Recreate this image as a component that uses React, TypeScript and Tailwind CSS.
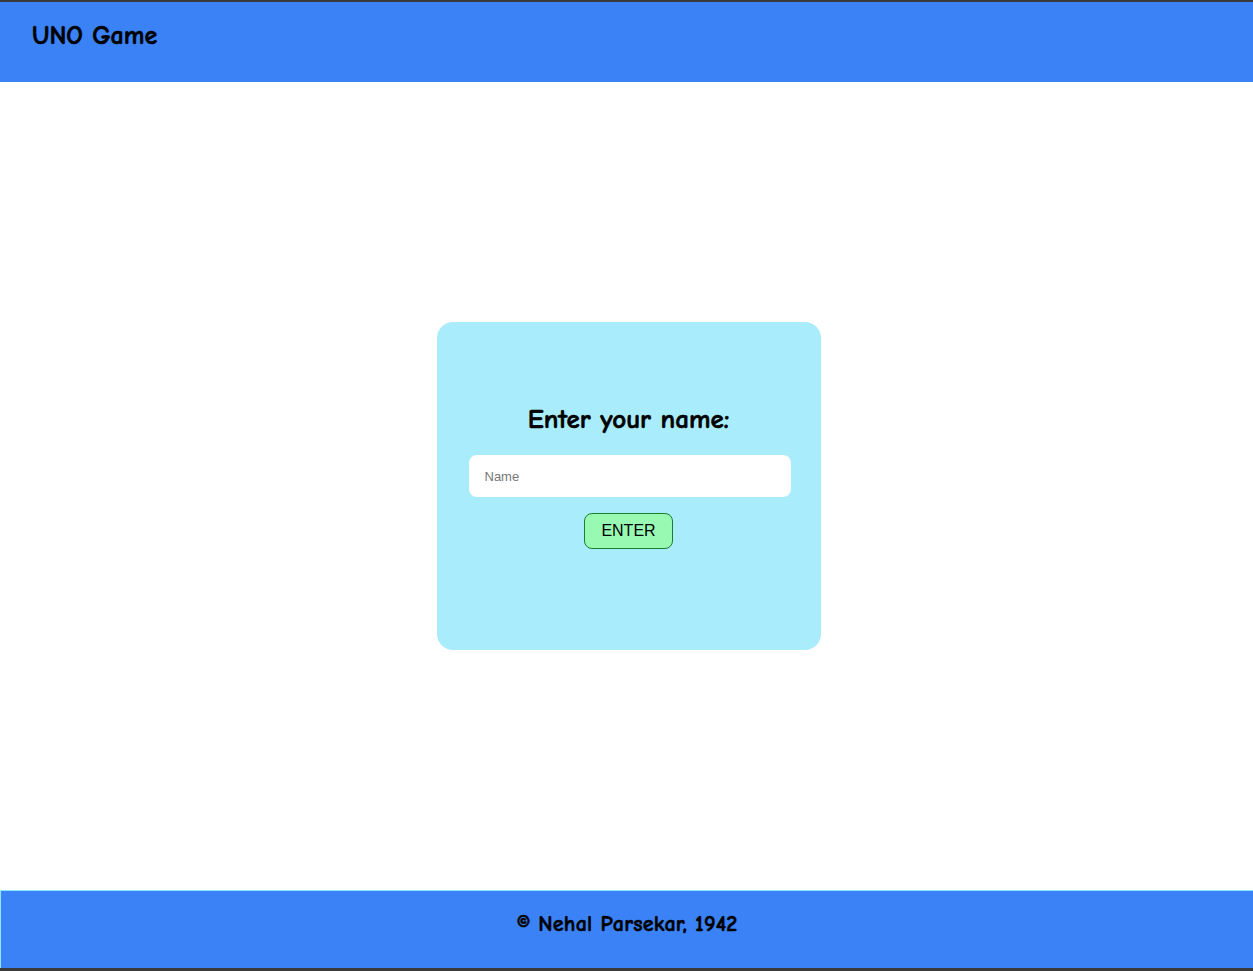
export default function App() {
  const comic = { fontFamily: '"Comic Sans MS", "Comic Neue", "Liberation Sans", sans-serif' };
  return (
    <div className="flex h-[971px] flex-col bg-white border-t-2 border-b-[3px] border-[#3a3a3a]">
      <header className="h-[80px] shrink-0 bg-[#3b82f6] px-8 pt-[18px]">
        <h1 className="text-[26px] font-bold leading-8 text-black [-webkit-text-stroke:0.6px_black]" style={comic}>UNO Game</h1>
      </header>
      <main className="flex flex-1 items-center justify-center pl-1">
        <div className="flex h-[328px] w-96 flex-col items-center rounded-2xl bg-[#a9ecfc] px-8 pt-[82px]">
          <h2 className="text-[27px] font-bold leading-8 text-black [-webkit-text-stroke:0.6px_black]" style={comic}>Enter your name:</h2>
          <input
            type="text"
            placeholder="Name"
            className="mt-[19px] h-[42px] w-[322px] shrink-0 self-start rounded-lg bg-white px-4 text-[13px] text-black outline-none placeholder:text-[#777]"
            style={{ fontFamily: '"Liberation Sans", Arial, sans-serif' }}
          />
          <button
            className="mt-4 h-9 w-[89px] rounded-lg border border-[#1a7f2e] bg-[#98fab2] text-base text-black"
            style={{ fontFamily: '"Liberation Sans", Arial, sans-serif' }}
          >
            ENTER
          </button>
        </div>
      </main>
      <footer className="flex h-[78px] shrink-0 items-center justify-center border-l border-t border-[#8ee6ff] bg-[#3b82f6] pb-3">
        <p className="text-[22px] font-bold leading-7 tracking-[0.2px] text-black [-webkit-text-stroke:0.5px_black]" style={comic}>© Nehal Parsekar, 1942</p>
      </footer>
    </div>
  );
}
